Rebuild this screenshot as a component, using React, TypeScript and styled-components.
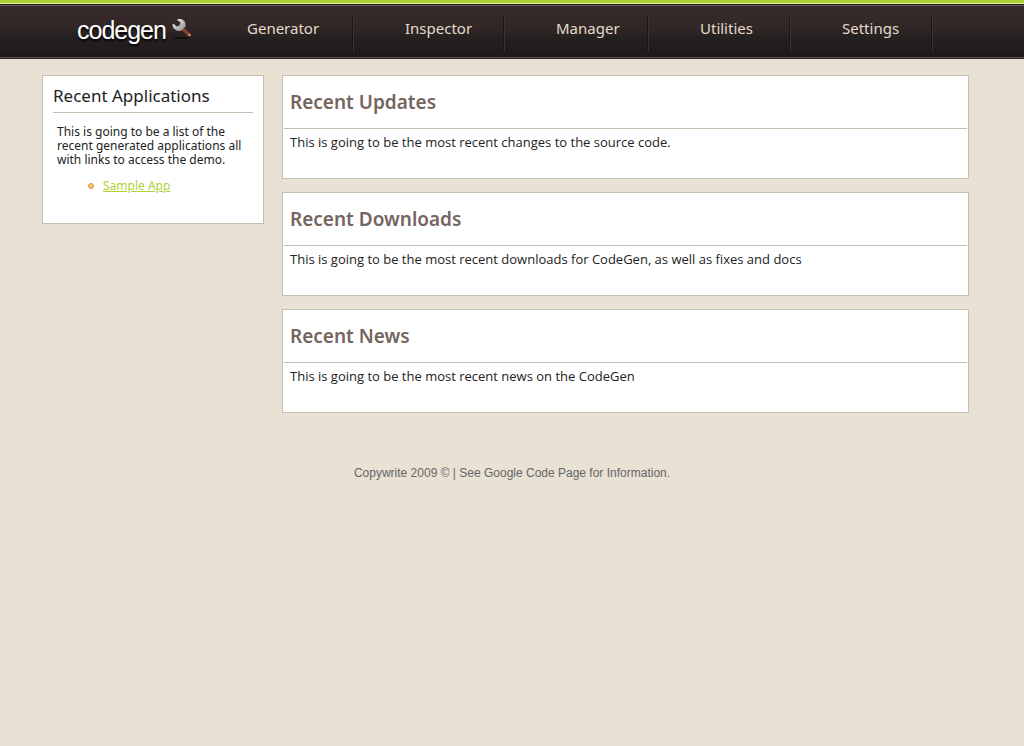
import React from "react";
import styled, { createGlobalStyle } from "styled-components";

const humanist = `"Trebuchet MS", "Noto Sans", "Open Sans", sans-serif`;
const grotesque = `Helvetica, "Liberation Sans", Arial, sans-serif`;

const GlobalStyle = createGlobalStyle`
  *, *::before, *::after { box-sizing: border-box; }
  body {
    margin: 0;
    background: #e8e1d4;
    color: #222;
    font-family: ${humanist};
    font-size: 12px;
    line-height: 14px;
  }
  h1, h2, p, ul { margin: 0; padding: 0; font-weight: normal; }
`;

const Header = styled.header`
  height: 59px;
  border-top: 3px solid #b0d136;
  background: linear-gradient(#dcef90 0 1px, #231f1f 1px 2px, #665c59 2px 3px, #372c2b 3px, #302625 26px, #262121 34px, #1e1818 54px, #5a504e 54px 55px, #2b2524 55px);
  display: flex;
  align-items: flex-start;
  padding-left: 77px;
`;

const Logo = styled.a`
  flex: none;
  width: 119px;
  margin-top: 13px;
  display: flex;
  align-items: flex-start;
  gap: 6px;
  color: #fff;
  font: 25px/28px ${grotesque};
  letter-spacing: -1px;
  text-decoration: none;
  text-shadow: 0 2px 2px #000;
`;

const Wrench = styled.svg`
  flex: none;
  margin-top: 2px;
`;

const NavList = styled.ul`
  display: flex;
  list-style: none;
  margin-top: 13px;
`;

const NavItem = styled.li<{ $width: number }>`
  flex: none;
  width: ${(p) => p.$width}px;
  height: 36px;
  padding-left: 51px;
  border-right: 1px solid #3d3432;
  box-shadow: inset -1px 0 #1a1514;
`;

const NavLink = styled.a`
  color: #e3dbcd;
  font-size: 15px;
  line-height: 24px;
  text-decoration: none;
`;

const Page = styled.div`
  display: flex;
  align-items: flex-start;
  gap: 18px;
  padding: 16px 55px 0 42px;
`;

const Panel = styled.section`
  background: #fff;
  border: 1px solid #c3beb0;
`;

const Sidebar = styled(Panel)`
  flex: none;
  width: 222px;
  padding: 8px 10px 30px;
`;

const SideTitle = styled.h2`
  padding-bottom: 4px;
  border-bottom: 1px solid #c3beb0;
  font-size: 17px;
  line-height: 24px;
`;

const SideText = styled.p`
  padding: 12px 0 12px 4px;
`;

const AppList = styled.ul`
  list-style: none;
  padding-left: 35px;
`;

const AppItem = styled.li`
  display: flex;
  align-items: center;
  gap: 9px;
`;

const AppLink = styled.a`
  color: #b0d136;
`;

const Main = styled.main`
  flex: 1;
  display: flex;
  flex-direction: column;
  gap: 13px;
`;

const Card = styled(Panel)`
  padding: 0 1px 28px;
`;

const CardTitle = styled.h2`
  padding: 12px 6px;
  border-bottom: 1px solid #c3beb0;
  color: #75655f;
  font-size: 19px;
  font-weight: 600;
  line-height: 28px;
`;

const CardText = styled.p`
  padding: 6px 6px 0;
  font-family: "Trebuchet MS", "Open Sans", "Noto Sans", sans-serif;
  font-size: 13px;
  line-height: 15px;
`;

const Footer = styled.footer`
  margin: 53px 0 20px;
  color: #666;
  font-family: ${grotesque};
  text-align: center;
`;

const nav = [
  { label: "Generator", width: 158 },
  { label: "Inspector", width: 151 },
  { label: "Manager", width: 144 },
  { label: "Utilities", width: 142 },
  { label: "Settings", width: 142 },
];

const cards = [
  { title: "Recent Updates", text: "This is going to be the most recent changes to the source code." },
  { title: "Recent Downloads", text: "This is going to be the most recent downloads for CodeGen, as well as fixes and docs" },
  { title: "Recent News", text: "This is going to be the most recent news on the CodeGen" },
];

export default function App() {
  return (
    <>
      <GlobalStyle />
      <Header>
        <Logo href="#">
          codegen
          <Wrench width="22" height="22" viewBox="0 0 22 22" aria-hidden="true">
            <defs>
              <linearGradient id="steel" x1="0" y1="0" x2="1" y2="1">
                <stop offset="0" stopColor="#f2f2f2" />
                <stop offset="1" stopColor="#8c8c8c" />
              </linearGradient>
            </defs>
            <ellipse cx="10" cy="20" rx="9" ry="1" fill="#151010" />
            <path d="M11 11 L17.500 17" stroke="#3d1812" strokeWidth="5" strokeLinecap="round" />
            <path d="M11 11 L17.500 17" stroke="#86453a" strokeWidth="3.500" strokeLinecap="round" />
            <path d="M5.500 1.500 C10 0 13.500 3 13.500 7 L13.500 8.500 L9.500 12.500 C5 14 .5 11 .5 6.500 L1.500 5.500 L4.500 8.500 L7.500 7.500 L8.500 4.500 L5 2 Z" fill="url(#steel)" />
            <circle cx="17.500" cy="17" r="1" fill="#d9a79c" />
          </Wrench>
        </Logo>
        <nav>
          <NavList>
            {nav.map((n) => (
              <NavItem key={n.label} $width={n.width}>
                <NavLink href="#">{n.label}</NavLink>
              </NavItem>
            ))}
          </NavList>
        </nav>
      </Header>
      <Page>
        <Sidebar as="aside">
          <SideTitle>Recent Applications</SideTitle>
          <SideText>
            This is going to be a list of the recent generated applications all with links to access the demo.
          </SideText>
          <AppList>
            <AppItem>
              <svg width="6" height="6" viewBox="0 0 6 6" aria-hidden="true">
                <circle cx="3" cy="3" r="2.500" fill="#f9c08a" stroke="#ee8b3a" />
              </svg>
              <AppLink href="#">Sample App</AppLink>
            </AppItem>
          </AppList>
        </Sidebar>
        <Main>
          {cards.map((c) => (
            <Card key={c.title}>
              <CardTitle>{c.title}</CardTitle>
              <CardText>{c.text}</CardText>
            </Card>
          ))}
        </Main>
      </Page>
      <Footer>Copywrite 2009 © | See Google Code Page for Information.</Footer>
    </>
  );
}
